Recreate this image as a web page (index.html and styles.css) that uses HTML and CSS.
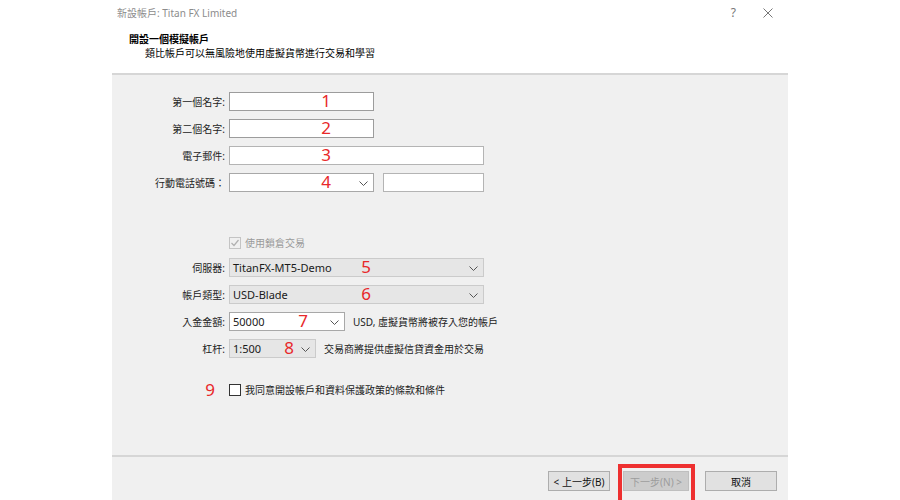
FILE: index.html
```html
<!DOCTYPE html>
<html lang="zh-Hant">
<head>
  <meta charset="UTF-8" />
  <title>新設帳戶</title>
  <link rel="stylesheet" href="styles.css">
</head>
<body>
  <div class="dialog">
    <div class="titlebar">
      <span class="title">新設帳戶: Titan FX Limited</span>
      <span class="help">?</span>
      <svg class="close" width="10" height="10" viewBox="0 0 10 10"><path d="M0.5 0.5L9.5 9.5M9.5 0.5L0.5 9.5" stroke="#777" stroke-width="1" fill="none"/></svg>
    </div>

    <div class="header">
      <div class="h-title">開設一個模擬帳戶</div>
      <div class="h-sub">類比帳戶可以無風險地使用虛擬貨幣進行交易和學習</div>
    </div>

    <div class="content">
      <div class="row">
        <label>第一個名字:</label>
        <div class="field w145"><span class="num n1">1</span></div>
      </div>
      <div class="row">
        <label>第二個名字:</label>
        <div class="field w145"><span class="num n1">2</span></div>
      </div>
      <div class="row">
        <label>電子郵件:</label>
        <div class="field w255 light"><span class="num n1">3</span></div>
      </div>
      <div class="row">
        <label>行動電話號碼：</label>
        <div class="field w145 select-white">
          <span class="num n1">4</span>
          <svg class="chev" width="9" height="5" viewBox="0 0 9 5"><path d="M0.5 0.5L4.5 4.5L8.5 0.5" fill="none" stroke="#555"/></svg>
        </div>
        <div class="field w101 light gap9"></div>
      </div>

      <div class="row lock">
        <label></label>
        <span class="check disabled">
          <svg width="10" height="10" viewBox="0 0 10 10"><path d="M1.5 5L4 7.5L8.5 2" fill="none" stroke="#b0b0b0" stroke-width="1.2"/></svg>
        </span>
        <span class="check-text muted">使用鎖倉交易</span>
      </div>

      <div class="row after-lock">
        <label>伺服器:</label>
        <div class="field w255 select">
          <span class="value">TitanFX-MT5-Demo</span>
          <span class="num n5">5</span>
          <svg class="chev" width="9" height="5" viewBox="0 0 9 5"><path d="M0.5 0.5L4.5 4.5L8.5 0.5" fill="none" stroke="#555"/></svg>
        </div>
      </div>
      <div class="row">
        <label>帳戶類型:</label>
        <div class="field w255 select">
          <span class="value">USD-Blade</span>
          <span class="num n5">6</span>
          <svg class="chev" width="9" height="5" viewBox="0 0 9 5"><path d="M0.5 0.5L4.5 4.5L8.5 0.5" fill="none" stroke="#555"/></svg>
        </div>
      </div>
      <div class="row">
        <label>入金金額:</label>
        <div class="field w116 select-white">
          <span class="value">50000</span>
          <span class="num n7">7</span>
          <svg class="chev" width="9" height="5" viewBox="0 0 9 5"><path d="M0.5 0.5L4.5 4.5L8.5 0.5" fill="none" stroke="#555"/></svg>
        </div>
        <span class="note">USD, 虛擬貨幣將被存入您的帳戶</span>
      </div>
      <div class="row">
        <label>杠杆:</label>
        <div class="field w87 select">
          <span class="value">1:500</span>
          <span class="num n8">8</span>
          <svg class="chev" width="9" height="5" viewBox="0 0 9 5"><path d="M0.5 0.5L4.5 4.5L8.5 0.5" fill="none" stroke="#555"/></svg>
        </div>
        <span class="note">交易商將提供虛擬信貸資金用於交易</span>
      </div>

      <div class="row agree">
        <label class="num-label">9</label>
        <span class="check"></span>
        <span class="check-text">我同意開設帳戶和資料保護政策的條款和條件</span>
      </div>
    </div>

    <div class="footer">
      <button class="btn prev">&lt; 上一步(B)</button>
      <span class="mark"><button class="btn next" disabled>下一步(N) &gt;</button></span>
      <button class="btn cancel">取消</button>
    </div>
  </div>
</body>
</html>
```

FILE: styles.css
```css
* {
  box-sizing: border-box;
}

body {
  margin: 0;
  background: #fff;
  font-family: "Noto Sans", "Noto Sans CJK TC", sans-serif;
  font-size: 10px;
  line-height: 14px;
  color: #111;
}

.dialog {
  width: 676px;
  height: 500px;
  margin-left: 112px;
  display: flex;
  flex-direction: column;
}

/* title bar */
.titlebar {
  height: 25px;
  display: flex;
  align-items: center;
  padding-left: 5px;
  color: #8c8c8c;
}

.title {
  flex: 1;
}

.help {
  font-size: 12px;
  color: #777;
  margin-right: 27px;
}

.close {
  margin-right: 15px;
}

/* header */
.header {
  height: 48px;
  padding: 7px 0 0 17px;
}

.h-title {
  font-weight: bold;
  color: #000;
}

.h-sub {
  padding-left: 16px;
  color: #000;
}

/* content */
.content {
  height: 382px;
  background: #f0f0f0;
  border-top: 2px solid #d6d6d6;
  padding-top: 17px;
}

.row {
  display: flex;
  align-items: center;
  height: 19px;
}

.row + .row {
  margin-top: 8px;
}

.row.lock {
  margin-top: 41px;
}

.row.after-lock {
  margin-top: 6px;
}

.row.agree {
  margin-top: 22px;
}

.row label {
  width: 113px;
  margin-right: 4px;
  text-align: right;
  color: #222;
  flex-shrink: 0;
}

.field {
  position: relative;
  height: 19px;
  background: #fff;
  border: 1px solid #9c9c9c;
  display: flex;
  align-items: center;
  padding-left: 3px;
}

.field.light {
  border-color: #b4b4b4;
}

.field.select {
  background: #e6e6e6;
  border-color: #cbcbcb;
}

.field.select-white {
  border-color: #a8a8a8;
}

.w145 { width: 145px; }
.w255 { width: 255px; }
.w101 { width: 101px; }
.w116 { width: 116px; }
.w87 { width: 87px; }

.gap9 {
  margin-left: 9px;
}

.value {
  font-size: 11px;
  color: #1a1a1a;
}

.chev {
  position: absolute;
  right: 5px;
  top: 7px;
}

.note {
  margin-left: 8px;
  color: #222;
}

/* red annotation numbers */
.num {
  position: absolute;
  top: -3px;
  transform: translateX(-50%);
  font-family: "Noto Sans", sans-serif;
  font-size: 17px;
  line-height: 22px;
  color: #e8282a;
}

.n1 { left: 96px; }
.n5 { left: 136px; }
.n7 { left: 73px; }
.n8 { left: 59px; }

.num-label.num-label {
  font-family: "Noto Sans", sans-serif;
  font-size: 17px;
  color: #e8282a;
  padding-right: 10px;
}

/* checkboxes */
.check {
  width: 12px;
  height: 12px;
  border: 1px solid #333;
  background: #fff;
  display: flex;
  align-items: center;
  justify-content: center;
}

.check.disabled {
  border-color: #c4c4c4;
  background: #f0f0f0;
}

.check-text {
  margin-left: 4px;
  color: #222;
}

.muted {
  color: #9a9a9a;
}

/* footer */
.footer {
  flex: 1;
  background: #f0f0f0;
  border-top: 2px solid #d6d6d6;
  display: flex;
  justify-content: flex-end;
  align-items: flex-start;
  padding: 14px 11px 0 0;
}

.btn {
  height: 20px;
  padding: 0;
  font-family: inherit;
  font-size: 10px;
  color: #111;
  background: #e1e1e1;
  border: 1px solid #adadad;
}

.prev { width: 62px; }

.next {
  width: 66px;
  background: #cccccc;
  border-color: #bfbfbf;
  color: #9c9c9c;
}

.cancel { width: 72px; }

.mark {
  position: relative;
  margin: 0 16px 0 13px;
}

.mark::after {
  content: "";
  position: absolute;
  left: -5px;
  right: -6px;
  top: -7px;
  bottom: -16px;
  border: 4px solid #ee3030;
}
```
